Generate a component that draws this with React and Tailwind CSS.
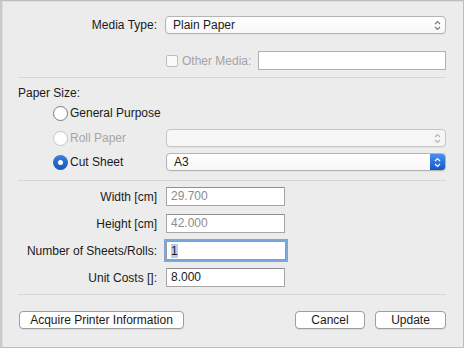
const font = { fontFamily: '"Liberation Sans", Arial, sans-serif' };

function Chevrons({ color = "#8a8a8a" }) {
  return (
    <svg width="7" height="11" viewBox="0 0 7 11" fill="none" stroke={color} strokeWidth="1.2">
      <path d="M1 4 L3.5 1.5 L6 4" />
      <path d="M1 7 L3.5 9.5 L6 7" />
    </svg>
  );
}

function Popup({ value, disabled, active }) {
  return (
    <div className={`flex-1 h-[18px] flex items-stretch rounded-[4px] border overflow-hidden shadow-[0_1px_0_rgba(0,0,0,0.04)] ${disabled ? "border-[#c6c6c6] bg-[#f6f6f6]" : "border-[#b4b4b4] bg-gradient-to-b from-white to-[#f7f7f7]"}`}>
      <div className={`flex-1 pl-[7px] leading-[16px] ${disabled ? "text-[#a8a8a8]" : "text-[#1a1a1a]"}`}>{value}</div>
      {active ? (
        <div className="w-[15px] flex items-center justify-center bg-gradient-to-b from-[#4a8ff0] to-[#1257c8]">
          <Chevrons color="#ffffff" />
        </div>
      ) : (
        <div className="w-[15px] flex items-center justify-center">
          <Chevrons color={disabled ? "#b5b5b5" : "#7d7d7d"} />
        </div>
      )}
    </div>
  );
}

function Radio({ label, checked, disabled }) {
  return (
    <div className="flex items-center gap-[2px]">
      {checked ? (
        <div className="w-[15px] h-[15px] rounded-full bg-gradient-to-b from-[#3a7fe0] to-[#1255bf] flex items-center justify-center">
          <div className="w-[5px] h-[5px] rounded-full bg-white" />
        </div>
      ) : (
        <div className={`w-[15px] h-[15px] rounded-full bg-white border ${disabled ? "border-[#c4c4c4]" : "border-[#7c7c7c]"}`} />
      )}
      <span className={disabled ? "text-[#a6a6a6]" : "text-[#1a1a1a]"}>{label}</span>
    </div>
  );
}

function Field({ label, value, dim, focused }) {
  return (
    <div className="flex items-center h-[19px]">
      <div className="w-[139px] text-right text-[#1a1a1a]">{label}</div>
      <div className="w-[9px]" />
      {focused ? (
        <div className="w-[120px] h-[19px] border border-[#9a9a9a] bg-white shadow-[0_0_0_2px_#7aa7e0] flex items-center pl-[4px]">
          <span className="bg-[#b3d0f5] text-[#1a1a1a] leading-[14px]">1</span>
        </div>
      ) : (
        <div className={`w-[119px] h-[19px] border border-[#a6a6a6] border-t-[#8f8f8f] bg-white pl-[4px] leading-[17px] ${dim ? "text-[#8c8c8c]" : "text-[#1a1a1a]"}`}>
          {value}
        </div>
      )}
    </div>
  );
}

function Button({ children, className = "" }) {
  return (
    <div className={`h-[18px] rounded-[4px] border border-[#9d9d9d] bg-white shadow-[0_1px_0_rgba(0,0,0,0.08)] flex items-center justify-center text-[#1a1a1a] ${className}`}>
      {children}
    </div>
  );
}

export default function App() {
  return (
    <div style={font} className="w-[464px] h-[348px] bg-[#ececec] text-[12px] border border-[#bdbdbd] border-l-2 border-l-[#c9c9c9] shadow-[inset_1px_1px_1px_rgba(0,0,0,0.06)] flex flex-col pl-[16px] pr-[17px] pt-[15px]">
      {/* media type */}
      <div className="flex items-center h-[18px]">
        <div className="w-[139px] text-right text-[#1a1a1a]">Media Type:</div>
        <div className="w-[8px]" />
        <Popup value="Plain Paper" />
      </div>
      <div className="flex items-center h-[19px] mt-[17px]">
        <div className="w-[148px]" />
        <div className="w-[12px] h-[12px] rounded-[2px] border border-[#bdbdbd] bg-[#fafafa]" />
        <span className="ml-[4px] text-[#a3a3a3]">Other Media:</span>
        <div className="ml-[7px] flex-1 h-[19px] border border-[#b0b0b0] bg-white" />
      </div>
      <div className="h-px bg-[#d6d6d6] mt-[7px]" />

      {/* paper size */}
      <div className="mt-[8px] h-[14px] leading-[14px] text-[#1a1a1a]">Paper Size:</div>
      <div className="mt-[5px] pl-[35px] h-[16px] flex items-center">
        <Radio label="General Purpose" />
      </div>
      <div className="mt-[8px] flex items-center h-[18px]">
        <div className="w-[148px] pl-[35px]">
          <Radio label="Roll Paper" disabled />
        </div>
        <Popup value="" disabled />
      </div>
      <div className="mt-[6px] flex items-center h-[18px]">
        <div className="w-[148px] pl-[35px]">
          <Radio label="Cut Sheet" checked />
        </div>
        <Popup value="A3" active />
      </div>
      <div className="h-px bg-[#d6d6d6] mt-[9px]" />

      {/* sizes */}
      <div className="mt-[6px] flex flex-col gap-[8px]">
        <Field label="Width [cm]" value="29.700" dim />
        <Field label="Height [cm]" value="42.000" dim />
        <Field label="Number of Sheets/Rolls:" focused />
        <Field label="Unit Costs []:" value="8.000" />
      </div>
      <div className="h-px bg-[#d6d6d6] mt-[7px]" />

      {/* buttons */}
      <div className="mt-[16px] flex items-center">
        <Button className="w-[165px] ml-[1px]">Acquire Printer Information</Button>
        <div className="flex-1" />
        <Button className="w-[70px]">Cancel</Button>
        <Button className="w-[71px] ml-[10px]">Update</Button>
      </div>
    </div>
  );
}
